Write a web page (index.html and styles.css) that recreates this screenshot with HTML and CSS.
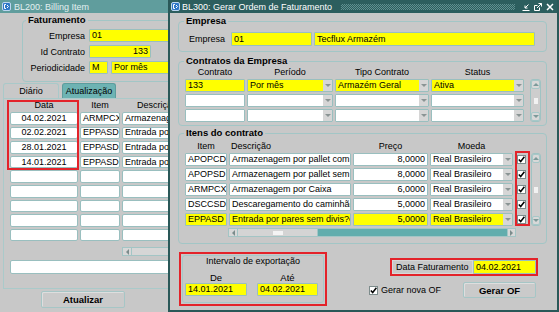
FILE: index.html
```html
<!DOCTYPE html>
<html lang="pt">
<head>
<meta charset="utf-8">
<title>BL300: Gerar Ordem de Faturamento</title>
<link rel="stylesheet" href="styles.css">
</head>
<body>
<div class="desktop">

  <section class="win win-left">
    <header class="tb tb-inactive">
      <svg class="appicon" width="9" height="9" viewBox="0 0 9 9"><rect x="0.5" y="0.5" width="8" height="8" rx="1.5" fill="#2f78c8" stroke="#bcd6f0"/><path d="M4 2.5H2.5v4H4M5 3l1.5 1.5L5 6" fill="none" stroke="#fff"/></svg>
      <span>BL200: Billing Item</span>
    </header>

    <div class="frame fat">
      <span class="ftitle">Faturamento</span>
      <div class="fat-grid">
        <span class="lbl">Empresa</span><div class="fld y w-emp">01</div>
        <span class="lbl">Id Contrato</span><div class="fld y w-id r">133</div>
        <span class="lbl">Periodicidade</span>
        <div class="pair"><div class="fld y w-m">M</div><div class="fld y w-per">Por mês</div></div>
      </div>
    </div>

    <div class="tabs">
      <div class="tab">Diário</div>
      <div class="tab tab-teal">Atualização</div>
    </div>

    <div class="panel">
      <div class="lgrid">
        <div class="hd">Data</div><div class="hd">Item</div><div class="hd">Descrição</div>
        <div class="fld c">04.02.2021</div><div class="fld">ARMPCX</div><div class="fld">Armazenagem</div>
        <div class="fld c">02.02.2021</div><div class="fld">EPPASD</div><div class="fld">Entrada por</div>
        <div class="fld c">28.01.2021</div><div class="fld">EPPASD</div><div class="fld">Entrada por</div>
        <div class="fld c">14.01.2021</div><div class="fld">EPPASD</div><div class="fld">Entrada por</div>
        <div class="fld"></div><div class="fld"></div><div class="fld"></div>
        <div class="fld"></div><div class="fld"></div><div class="fld"></div>
        <div class="fld"></div><div class="fld"></div><div class="fld"></div>
        <div class="fld"></div><div class="fld"></div><div class="fld"></div>
        <div class="fld"></div><div class="fld"></div><div class="fld"></div>
      </div>
      <div class="hscroll lhs">
        <span class="sb-btn"><i class="tri tri-l"></i></span>
        <span class="hs-light"></span>
      </div>
      <div class="fld lwide"></div>
      <div class="annot an-data"></div>
    </div>

    <div class="btn btn-atual">Atualizar</div>
  </section>

  <section class="win win-right">
    <header class="tb tb-active">
      <svg class="appicon" width="9" height="9" viewBox="0 0 9 9"><rect x="0.5" y="0.5" width="8" height="8" rx="1.5" fill="#2f78c8" stroke="#bcd6f0"/><path d="M4 2.5H2.5v4H4M5 3l1.5 1.5L5 6" fill="none" stroke="#fff"/></svg>
      <span>BL300: Gerar Ordem de Faturamento</span>
      <span class="tb-pattern"></span>
      <span class="tb-ctrls">
        <svg width="8" height="8" viewBox="0 0 8 8"><path d="M0.5 7.5h7M6.5 1.5L3 5M3 2.5V5h2.5" fill="none" stroke="#fff"/></svg>
        <svg width="8" height="8" viewBox="0 0 8 8"><path d="M0.5 2.5h3M0.5 2.5v5h5v-3" fill="none" stroke="#fff"/><path d="M3 5L7.5 0.5M4.5 0.5h3v3" fill="none" stroke="#fff"/></svg>
        <svg width="8" height="8" viewBox="0 0 8 8"><path d="M1 1l6 6M7 1L1 7" fill="none" stroke="#fff" stroke-width="1.5"/></svg>
      </span>
    </header>

    <div class="rbody">
      <div class="frame f-emp">
        <span class="ftitle">Empresa</span>
        <div class="emp-row">
          <span class="lbl emp-lbl">Empresa</span>
          <div class="fld y emp-cod">01</div>
          <div class="fld y emp-nome">Tecflux Armazém</div>
        </div>
      </div>

      <div class="frame f-con">
        <span class="ftitle">Contratos da Empresa</span>
        <div class="con-wrap">
          <div class="cgrid">
            <div class="hd">Contrato</div><div class="hd">Período</div><div class="hd">Tipo Contrato</div><div class="hd">Status</div>
            <div class="fld y">133</div>
            <div class="fld y dd"><span class="dd-t">Por mês</span><span class="arr"></span></div>
            <div class="fld y dd"><span class="dd-t">Armazém Geral</span><span class="arr"></span></div>
            <div class="fld y dd"><span class="dd-t">Ativa</span><span class="arr"></span></div>
            <div class="fld"></div>
            <div class="fld dd"><span class="dd-t"></span><span class="arr"></span></div>
            <div class="fld dd"><span class="dd-t"></span><span class="arr"></span></div>
            <div class="fld dd"><span class="dd-t"></span><span class="arr"></span></div>
            <div class="fld"></div>
            <div class="fld dd"><span class="dd-t"></span><span class="arr"></span></div>
            <div class="fld dd"><span class="dd-t"></span><span class="arr"></span></div>
            <div class="fld dd"><span class="dd-t"></span><span class="arr"></span></div>
          </div>
          <div class="vscroll vs-con">
            <span class="sb-btn"><i class="tri tri-u"></i></span>
            <span class="grip"></span>
            <span class="sb-btn"><i class="tri tri-d"></i></span>
          </div>
        </div>
      </div>

      <div class="frame f-itens">
        <span class="ftitle">Itens do contrato</span>
        <div class="it-wrap">
          <div class="igrid">
            <div class="hd">Item</div><div class="hd hd-l">Descrição</div><div class="hd">Preço</div><div class="hd">Moeda</div><div></div>

            <div class="fld">APOPCD</div><div class="fld">Armazenagem por pallet com controle</div><div class="fld r">8,0000</div>
            <div class="fld dd"><span class="dd-t">Real Brasileiro</span><span class="arr"></span></div>
            <div class="chk"><svg width="9" height="9" viewBox="0 0 9 9"><rect x="0.5" y="0.5" width="8" height="8" fill="#fff" stroke="#7d8c8c"/><path d="M1.8 4.4l1.9 2.1L7.4 1.8" fill="none" stroke="#000" stroke-width="1.5"/></svg></div>

            <div class="fld">APOPSD</div><div class="fld">Armazenagem por pallet sem controle</div><div class="fld r">8,0000</div>
            <div class="fld dd"><span class="dd-t">Real Brasileiro</span><span class="arr"></span></div>
            <div class="chk"><svg width="9" height="9" viewBox="0 0 9 9"><rect x="0.5" y="0.5" width="8" height="8" fill="#fff" stroke="#7d8c8c"/><path d="M1.8 4.4l1.9 2.1L7.4 1.8" fill="none" stroke="#000" stroke-width="1.5"/></svg></div>

            <div class="fld">ARMPCX</div><div class="fld">Armazenagem por Caixa</div><div class="fld r">6,0000</div>
            <div class="fld dd"><span class="dd-t">Real Brasileiro</span><span class="arr"></span></div>
            <div class="chk"><svg width="9" height="9" viewBox="0 0 9 9"><rect x="0.5" y="0.5" width="8" height="8" fill="#fff" stroke="#7d8c8c"/><path d="M1.8 4.4l1.9 2.1L7.4 1.8" fill="none" stroke="#000" stroke-width="1.5"/></svg></div>

            <div class="fld">DSCCSD</div><div class="fld">Descaregamento do caminhão</div><div class="fld r">5,0000</div>
            <div class="fld dd"><span class="dd-t">Real Brasileiro</span><span class="arr"></span></div>
            <div class="chk"><svg width="9" height="9" viewBox="0 0 9 9"><rect x="0.5" y="0.5" width="8" height="8" fill="#fff" stroke="#7d8c8c"/><path d="M1.8 4.4l1.9 2.1L7.4 1.8" fill="none" stroke="#000" stroke-width="1.5"/></svg></div>

            <div class="fld y">EPPASD</div><div class="fld y">Entrada por pares sem divis?o com</div><div class="fld y r">5,0000</div>
            <div class="fld y dd"><span class="dd-t">Real Brasileiro</span><span class="arr"></span></div>
            <div class="chk"><svg width="9" height="9" viewBox="0 0 9 9"><rect x="0.5" y="0.5" width="8" height="8" fill="#fff" stroke="#7d8c8c"/><path d="M1.8 4.4l1.9 2.1L7.4 1.8" fill="none" stroke="#000" stroke-width="1.5"/></svg></div>
          </div>
          <div class="vscroll vs-it">
            <span class="sb-btn"><i class="tri tri-u"></i></span>
            <span class="grip"></span>
            <span class="sb-btn"><i class="tri tri-d"></i></span>
          </div>
        </div>
        <div class="hscroll ihs">
          <span class="sb-btn"><i class="tri tri-l"></i></span>
          <span class="hs-thumb"><span class="grip-h"></span></span>
          <span class="hs-teal"></span>
          <span class="sb-btn sb-r"><i class="tri tri-r"></i></span>
        </div>
        <div class="annot an-chk"></div>
      </div>

      <div class="rbottom">
        <div class="annot-box intervalo">
          <div class="int-frame">
            <div class="int-title">Intervalo de exportação</div>
            <div class="int-row">
              <div class="int-col">
                <span class="int-lbl">De</span>
                <div class="fld y int-f1">14.01.2021</div>
              </div>
              <div class="int-col">
                <span class="int-lbl">Até</span>
                <div class="fld y int-f2">04.02.2021</div>
              </div>
            </div>
          </div>
        </div>

        <div class="rcol">
          <div class="annot-box datafat">
            <span class="df-lbl">Data Faturamento</span>
            <div class="fld y df-fld">04.02.2021</div>
          </div>
          <div class="act-row">
            <label class="cb-lbl">
              <svg width="9" height="9" viewBox="0 0 9 9"><rect x="0.5" y="0.5" width="8" height="8" fill="#fff" stroke="#7d8c8c"/><path d="M1.8 4.4l1.9 2.1L7.4 1.8" fill="none" stroke="#000" stroke-width="1.5"/></svg>
              <span>Gerar nova OF</span>
            </label>
            <div class="btn btn-gerar">Gerar OF</div>
          </div>
        </div>
      </div>
    </div>
  </section>

</div>
</body>
</html>
```

FILE: styles.css
```css
* { box-sizing: border-box; margin: 0; padding: 0; }

body {
  margin: 0;
  font-family: "Liberation Sans", Arial, sans-serif;
  font-size: 9px;
  color: #000;
  background: #c8c8c8;
}

.desktop {
  position: relative;
  width: 559px;
  height: 312px;
  overflow: hidden;
}

.win {
  position: absolute;
  top: 0;
  background: #c8c8c8;
}

.win-left { left: 0; width: 168px; height: 312px; overflow: hidden; }

.win-right {
  left: 168px;
  width: 391px;
  height: 312px;
  border: 2px solid #2a5858;
  border-top: 0;
}

/* title bars */
.tb {
  height: 13px;
  display: flex;
  align-items: center;
  white-space: nowrap;
  font-size: 9px;
}
.tb-inactive { background: #609d9d; color: #e2f0f0; padding-left: 2px; gap: 3px; }
.tb-active { background: #2c5e5e; color: #fff; padding-left: 1px; gap: 2px; }
.appicon { flex: none; display: block; }

.tb-pattern {
  flex: 1;
  height: 6px;
  margin: 0 5px 0 7px;
  background: repeating-conic-gradient(#5f9090 0 25%, transparent 0 50%) 0 0 / 2px 2px;
}
.tb-ctrls { display: flex; gap: 4px; padding-right: 3px; align-items: center; }
.tb-ctrls svg { display: block; }

/* frames */
.frame {
  position: relative;
  border: 1px solid #a2c6c6;
  border-radius: 4px;
}
.ftitle {
  position: absolute;
  top: -6px;
  left: 5px;
  padding: 0 2px;
  background: #c8c8c8;
  font-weight: bold;
  font-size: 9.5px;
  line-height: 10px;
  white-space: nowrap;
}

/* fields */
.fld {
  height: 13px;
  border: 1px solid #99bfbf;
  border-radius: 1px;
  background: #fff;
  display: flex;
  align-items: center;
  padding: 0 2px;
  white-space: nowrap;
  overflow: hidden;
  line-height: 11px;
}
.fld.y { background: #ffff00; }
.fld.r { justify-content: flex-end; }
.fld.c { justify-content: center; }

.dd { padding-right: 0; }
.dd-t { flex: 1; overflow: hidden; }
.arr {
  flex: none;
  width: 9px;
  height: 100%;
  background: #d6d6d6;
  display: flex;
  align-items: center;
  justify-content: center;
}
.arr::before {
  content: "";
  border-left: 3px solid transparent;
  border-right: 3px solid transparent;
  border-top: 3px solid #8a9494;
}

.lbl { text-align: right; white-space: nowrap; }
.hd { text-align: center; line-height: 9px; white-space: nowrap; }
.hd-l { text-align: left; padding-left: 2px; }

/* left window */
.fat {
  margin: 7px 0 0 22px;
  width: 180px;
  height: 62px;
  padding-top: 8px;
}
.fat .ftitle { left: 3px; }
.fat-grid {
  display: grid;
  grid-template-columns: 62px auto;
  column-gap: 4px;
  row-gap: 3px;
  align-items: center;
}
.w-emp { width: 90px; }
.w-id { width: 62px; }
.pair { display: flex; gap: 3px; }
.w-m { width: 19px; }
.w-per { width: 80px; }

.tabs {
  display: flex;
  gap: 3px;
  margin: 1px 0 0 3px;
  height: 15px;
}
.tab {
  width: 56px;
  border: 1px solid #a9c9c9;
  border-bottom: 0;
  border-radius: 3px 3px 0 0;
  display: flex;
  align-items: center;
  justify-content: center;
}
.tab-teal { width: 54px; background: #6db3b3; border-color: #5c9d9d; }

.panel {
  position: relative;
  margin-left: 3px;
  width: 195px;
  height: 191px;
  border: 1px solid #aacaca;
  padding: 2px 0 0 6px;
}
.lgrid {
  display: grid;
  grid-template-columns: 68px 40px 70px;
  grid-template-rows: 9px repeat(9, 12.6px);
  column-gap: 2px;
  row-gap: 2px;
}
.lgrid .fld { height: auto; border-radius: 2px; }

.hscroll {
  display: flex;
  height: 9px;
  border: 1px solid #a3c5c5;
  background: #d6d6d6;
}
.lhs { margin: 6px 0 0 112px; width: 80px; }
.hs-light { flex: 1; }

.sb-btn {
  flex: none;
  width: 9px;
  height: 100%;
  display: flex;
  align-items: center;
  justify-content: center;
  background: #d8d8d8;
  border-right: 1px solid #a3c5c5;
}
.sb-r { border-right: 0; border-left: 1px solid #a3c5c5; width: 8px; }

.tri { display: block; width: 0; height: 0; }
.tri-l { border-top: 3px solid transparent; border-bottom: 3px solid transparent; border-right: 3px solid #7c8c8c; }
.tri-r { border-top: 3px solid transparent; border-bottom: 3px solid transparent; border-left: 3px solid #7c8c8c; }
.tri-u { border-left: 3px solid transparent; border-right: 3px solid transparent; border-bottom: 3px solid #7c9a9a; }
.tri-d { border-left: 3px solid transparent; border-right: 3px solid transparent; border-top: 3px solid #7c9a9a; }

.lwide { margin-top: 4px; width: 190px; height: 14px; border-radius: 2px; }

.annot { position: absolute; border: 2px solid #e3232a; }
.an-data { left: 3px; top: 1px; width: 72px; height: 70px; }

.btn {
  display: flex;
  align-items: center;
  justify-content: center;
  font-weight: bold;
  font-size: 9.5px;
  background: #cacaca;
  border: 1px solid #a6c6c6;
  border-radius: 2px;
  box-shadow: inset 1px 1px 0 #dedede;
}
.btn-atual { margin: 2px 0 0 41px; width: 84px; height: 17px; }

/* right window */
.rbody { padding: 0 10px 0 8px; }

.f-emp { margin-top: 8px; height: 31px; padding-top: 10px; }
.emp-row { display: flex; align-items: center; }
.emp-lbl { width: 48px; padding-right: 2px; margin-right: 4px; }
.emp-cod { width: 81px; height: 14px; margin-right: 2px; }
.emp-nome { width: 221px; height: 14px; }

.f-con { margin-top: 9px; height: 65px; padding: 6px 0 0 6px; }
.con-wrap { display: flex; align-items: flex-start; }
.cgrid {
  display: grid;
  grid-template-columns: 60px 86px 94px 93px;
  grid-template-rows: 9px 13px 13px 13px;
  column-gap: 2px;
  row-gap: 2px;
}
.cgrid .fld { height: auto; }

.vscroll {
  display: flex;
  flex-direction: column;
  justify-content: space-between;
  align-items: stretch;
  border: 1px solid #9fc3c3;
  border-radius: 3px;
  background: #cdcdcd;
}
.vscroll .sb-btn {
  width: auto;
  height: 9px;
  border-radius: 2px;
  border: 1px solid #a6c8c8;
}
.vs-con { margin: 11px 0 0 6px; width: 11px; height: 43px; }
.grip {
  align-self: center;
  width: 4px;
  height: 6px;
  background: radial-gradient(circle, #f2f2f2 0.8px, transparent 1px) 0 0 / 2px 2px;
}

.f-itens { margin-top: 7px; height: 111px; padding: 8px 0 0 6px; }
.it-wrap { display: flex; align-items: flex-start; }
.igrid {
  display: grid;
  grid-template-columns: 42px 122px 75px 83px 13px;
  grid-template-rows: 9px repeat(5, 13px);
  column-gap: 2px;
  row-gap: 2px;
}
.igrid .fld { height: auto; }
.chk { display: flex; align-items: center; justify-content: center; }
.chk svg { display: block; }
.vs-it { margin: 11px 0 0 3px; width: 10px; height: 73px; }

.ihs { margin: 2px 0 0 43px; width: 288px; }
.hs-thumb {
  flex: none;
  width: 80px;
  display: flex;
  align-items: center;
  justify-content: center;
  background: #d4d4d4;
  border-right: 1px solid #a3c5c5;
}
.grip-h {
  width: 10px;
  height: 4px;
  background: radial-gradient(circle, #f4f4f4 0.8px, transparent 1px) 0 0 / 2px 2px;
}
.hs-teal { flex: 1; background: #62adad; }
.an-chk { left: 336px; top: 17px; width: 15px; height: 75px; }

.rbottom { display: flex; margin-top: 8px; align-items: flex-start; }

.annot-box { border: 2px solid #e3232a; }
.intervalo { margin-left: 1px; width: 148px; height: 54px; padding: 1px; }
.int-frame {
  height: 48px;
  border: 1px solid #a6c8c8;
  border-radius: 3px;
  padding: 1px 0 0 2px;
}
.int-title { text-align: center; line-height: 9px; padding-right: 2px; }
.int-row { display: flex; gap: 10px; margin-top: 7px; }
.int-col { display: flex; flex-direction: column; align-items: center; }
.int-lbl { line-height: 9px; font-size: 9.5px; margin-bottom: 1px; }
.int-f1 { width: 62px; }
.int-f2 { width: 61px; }

.rcol {
  margin-left: auto;
  margin-right: 9px;
  width: 169px;
  display: flex;
  flex-direction: column;
}
.datafat {
  align-self: flex-end;
  margin-top: 6px;
  width: 148px;
  height: 18px;
  display: flex;
  align-items: center;
}
.df-lbl {
  width: 81px;
  height: 14px;
  display: flex;
  align-items: center;
  padding-left: 3px;
  border: 1px solid #d8d8d8;
  white-space: nowrap;
}
.df-fld { flex: 1; height: 14px; }

.act-row {
  margin-top: 6px;
  display: flex;
  align-items: center;
  justify-content: space-between;
}
.cb-lbl { display: flex; align-items: center; gap: 3px; white-space: nowrap; }
.cb-lbl svg { display: block; }
.btn-gerar { width: 73px; height: 16px; margin-right: 2px; }
```
